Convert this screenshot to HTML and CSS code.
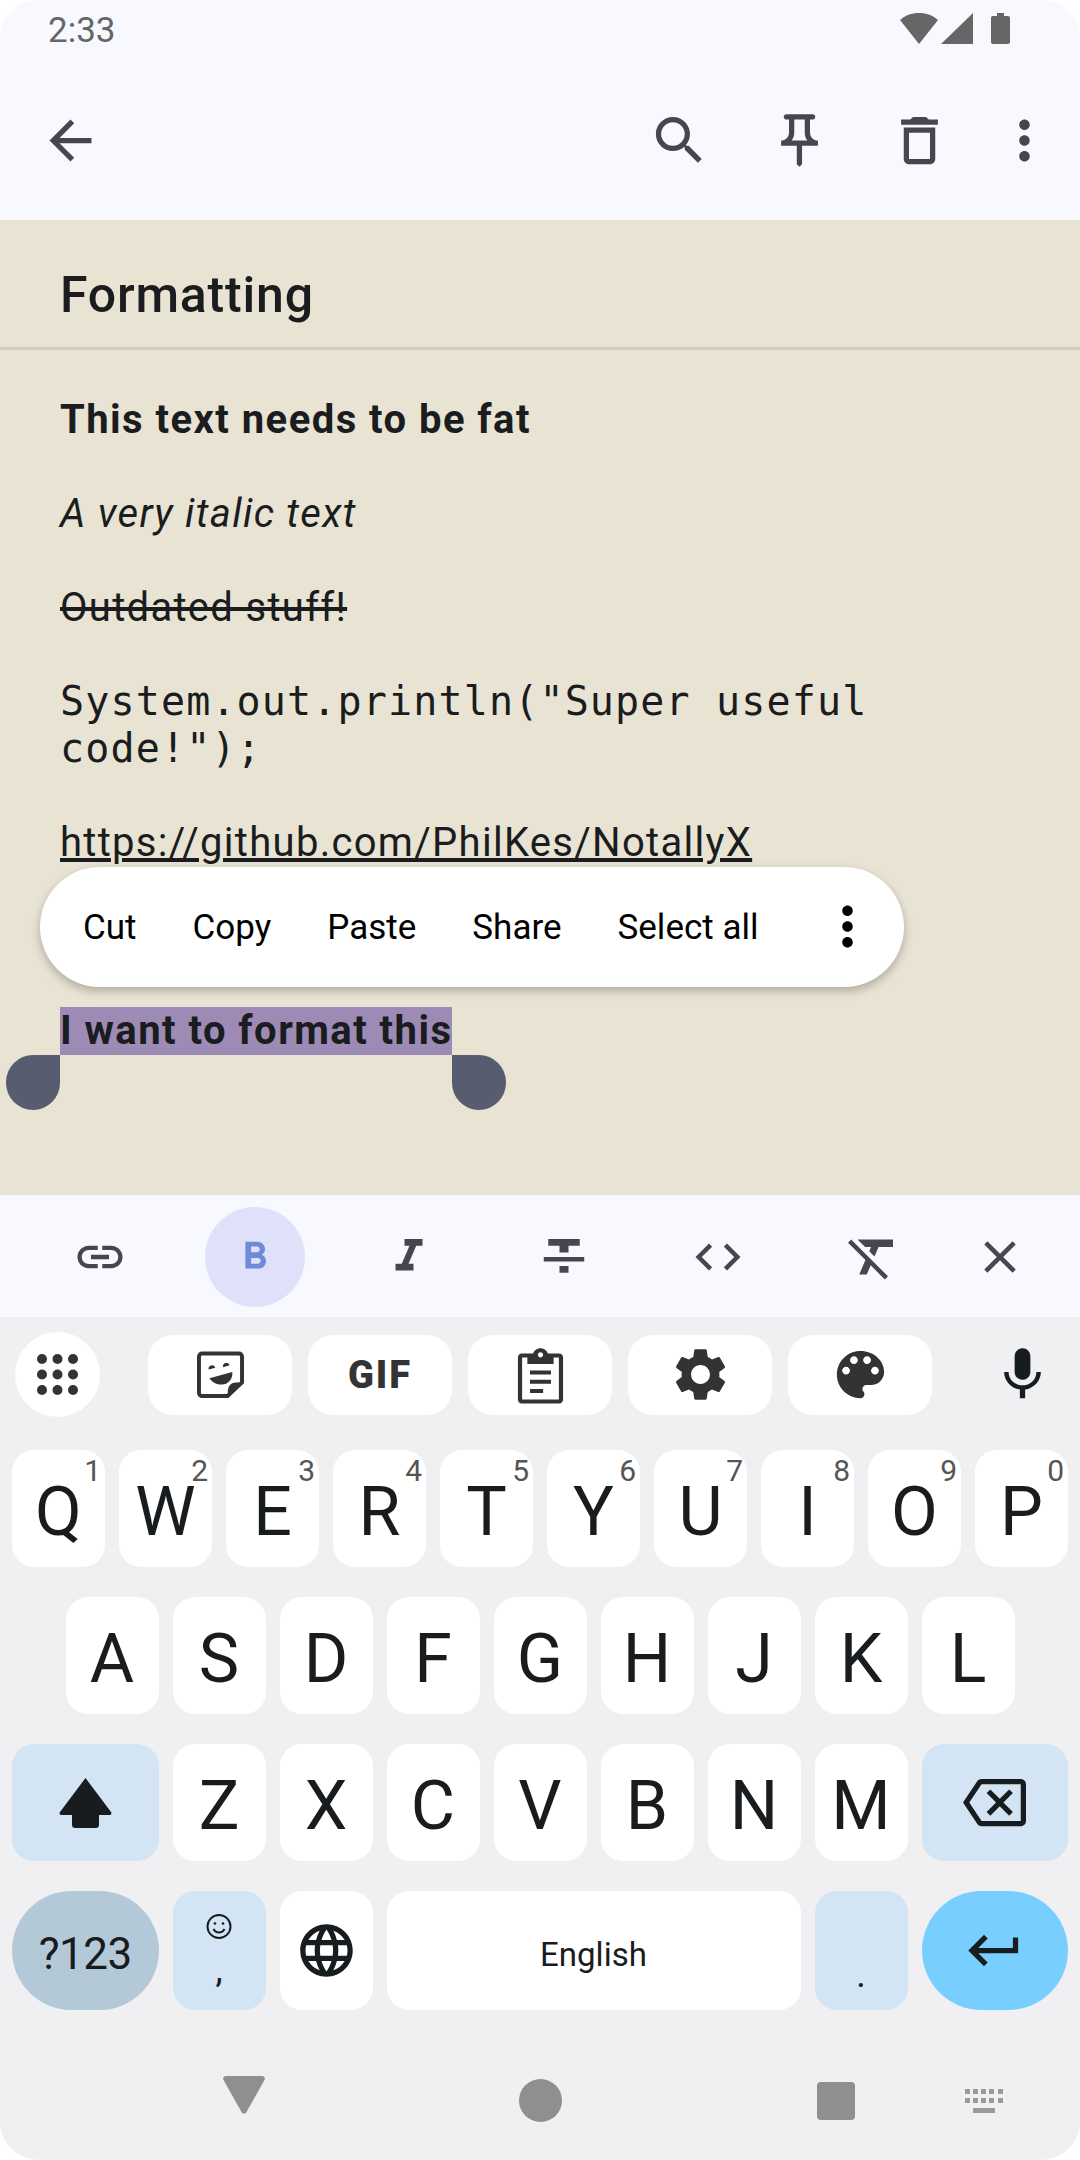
FILE: index.html
```html
<!DOCTYPE html>
<html lang="en">
<head>
<meta charset="UTF-8">
<title>Formatting</title>
<link rel="stylesheet" href="styles.css">
</head>
<body>
<div class="screen">

<!-- STATUS BAR -->
<div class="status">
<span class="time">2:33</span>
<div class="status-icons">
<svg class="wifi" viewBox="0 0 38 31"><path d="M19 31 0 7C5 2.500 11.500 0 19 0s14 2.500 19 7z"/></svg>
<svg class="signal" viewBox="0 0 32 31"><path d="M32 0v31H0z"/></svg>
<svg class="battery" viewBox="0 0 19 31"><path d="M6 0h7v3h4c1.100 0 2 .9 2 2v24c0 1.100-.9 2-2 2H2c-1.100 0-2-.9-2-2V5c0-1.100.9-2 2-2h4z"/></svg>
</div>
</div>

<!-- TOOLBAR -->
<div class="toolbar">
<svg class="icon back" viewBox="0 0 24 24"><path d="M20 11H7.830l5.590-5.590L12 4l-8 8 8 8 1.410-1.410L7.830 13H20v-2z"/></svg>
<svg class="icon" viewBox="0 0 24 24"><path d="M15.500 14h-.79l-.28-.27C15.410 12.590 16 11.110 16 9.500 16 5.910 13.090 3 9.500 3S3 5.910 3 9.500 5.910 16 9.500 16c1.610 0 3.090-.59 4.230-1.570l.27.28v.79l5 4.990L20.490 19l-4.990-5zm-6 0C7.010 14 5 11.990 5 9.500S7.010 5 9.500 5 14 7.010 14 9.500 11.990 14 9.500 14z"/></svg>
<svg class="icon" viewBox="0 0 24 24"><path d="M14 4v5c0 1.120.37 2.160 1 3H9c.65-.86 1-1.900 1-3V4h4m3-2H7c-.55 0-1 .45-1 1s.45 1 1 1h1v5c0 1.660-1.340 3-3 3v2h5.970v7l1 1 1-1v-7H19v-2c-1.660 0-3-1.340-3-3V4h1c.55 0 1-.45 1-1s-.45-1-1-1z"/></svg>
<svg class="icon" viewBox="0 0 24 24"><path d="M16 9v10H8V9h8m-1.500-6h-5l-1 1H5v2h14V4h-3.500l-1-1zM18 7H6v12c0 1.100.9 2 2 2h8c1.100 0 2-.9 2-2V7z"/></svg>
<svg class="icon more" viewBox="0 0 24 24"><path d="M12 8c1.100 0 2-.9 2-2s-.9-2-2-2-2 .9-2 2 .9 2 2 2zm0 2c-1.100 0-2 .9-2 2s.9 2 2 2 2-.9 2-2-.9-2-2-2zm0 6c-1.100 0-2 .9-2 2s.9 2 2 2 2-.9 2-2-.9-2-2-2z"/></svg>
</div>

<!-- NOTE -->
<div class="note">
<div class="title">Formatting</div>
<div class="body">
<p class="line bold">This text needs to be fat</p>
<p class="line italic">A very italic text</p>
<p class="line strike">Outdated stuff!</p>
<p class="line mono">System.out.println("Super useful<br>code!");</p>
<p class="line link">https://github.com/PhilKes/NotallyX</p>
<p class="line bold last"><span class="selected">I want to format this<i class="handle left"></i><i class="handle right"></i></span></p>
</div>

<!-- MENU SOBRE EL TEXTO -->
<div class="popup">
<span>Cut</span><span>Copy</span><span>Paste</span><span>Share</span><span>Select all</span>
<svg class="popup-more" viewBox="0 0 24 24"><path d="M12 8c1.100 0 2-.9 2-2s-.9-2-2-2-2 .9-2 2 .9 2 2 2zm0 2c-1.100 0-2 .9-2 2s.9 2 2 2 2-.9 2-2-.9-2-2-2zm0 6c-1.100 0-2 .9-2 2s.9 2 2 2 2-.9 2-2-.9-2-2-2z"/></svg>
</div>
</div>

<!-- FORMAT BAR -->
<div class="format-bar">
<div class="fmt"><svg class="icon" viewBox="0 0 24 24"><path d="M3.900 12c0-1.710 1.390-3.100 3.100-3.100h4V7H7c-2.760 0-5 2.240-5 5s2.240 5 5 5h4v-1.900H7c-1.710 0-3.100-1.390-3.100-3.100zM8 13h8v-2H8v2zm9-6h-4v1.900h4c1.710 0 3.100 1.390 3.100 3.100s-1.390 3.100-3.100 3.100h-4V17h4c2.760 0 5-2.240 5-5s-2.240-5-5-5z"/></svg></div>
<div class="fmt active"><svg class="icon" viewBox="0 0 24 24"><path d="M15.600 10.790c.97-.67 1.650-1.770 1.650-2.790 0-2.260-1.750-4-4-4H7v14h7.040c2.090 0 3.710-1.700 3.710-3.790 0-1.520-.86-2.820-2.150-3.420zM10 6.500h3c.83 0 1.500.67 1.500 1.500s-.67 1.500-1.500 1.500h-3v-3zm3.500 9H10v-3h3.500c.83 0 1.500.67 1.500 1.500s-.67 1.500-1.500 1.500z"/></svg></div>
<div class="fmt"><svg class="icon" viewBox="0 0 24 24"><path d="M10 4v3h2.210l-3.420 8H6v3h8v-3h-2.210l3.420-8H18V4z"/></svg></div>
<div class="fmt"><svg class="icon" viewBox="0 0 24 24"><path d="M10 19h4v-3h-4v3zM5 4v3h5v3h4V7h5V4H5zM3 14h18v-2H3v2z"/></svg></div>
<div class="fmt"><svg class="icon" viewBox="0 0 24 24"><path d="M9.400 16.600 4.800 12l4.600-4.600L8 6l-6 6 6 6 1.400-1.400zm5.200 0 4.600-4.600-4.600-4.600L16 6l6 6-6 6-1.400-1.400z"/></svg></div>
<div class="fmt clear"><svg class="icon" viewBox="0 0 24 24"><path d="M3.270 5 2 6.270l6.970 6.970L6.500 19h3l1.570-3.660L16.730 21 18 19.730 3.550 5.270 3.270 5zM6 5v.18L8.820 8h2.400l-.72 1.680 2.100 2.100L14.210 8H20V5H6z"/></svg></div>
<div class="fmt close"><svg class="icon" viewBox="0 0 24 24"><path d="M19 6.410 17.590 5 12 10.590 6.410 5 5 6.410 10.590 12 5 17.590 6.410 19 12 13.410 17.590 19 19 17.590 13.410 12z"/></svg></div>
</div>

<!-- TECLADO -->
<div class="keyboard">
<div class="suggest">
<div class="grid-btn">
<svg viewBox="0 0 42 42"><g><circle cx="5" cy="5" r="5"/><circle cx="20.500" cy="5" r="5"/><circle cx="36" cy="5" r="5"/><circle cx="5" cy="20.500" r="5"/><circle cx="20.500" cy="20.500" r="5"/><circle cx="36" cy="20.500" r="5"/><circle cx="5" cy="36" r="5"/><circle cx="20.500" cy="36" r="5"/><circle cx="36" cy="36" r="5"/></g></svg>
</div>
<div class="chip"><svg class="icon" viewBox="0 0 24 24"><path class="sticker-line" d="M5 4h14a1.200 1.200 0 0 1 1.200 1.200v9.800l-5.500 5.200H5a1.200 1.200 0 0 1-1.200-1.200V5.200A1.200 1.200 0 0 1 5 4z"/><path d="M14.800 20.500V18a3 3 0 0 1 3-3h3zM7.800 13.400 16.500 11c.3 2.800-1.700 4.800-4 4.800-2 0-3.700-.8-4.700-2.400zM7.500 10.100a1.300 1.300 0 0 1 2.500-.7zM13 9.200a1.300 1.300 0 0 1 2.500-.7z"/></svg></div>
<div class="chip gif">GIF</div>
<div class="chip"><svg class="icon" viewBox="0 0 24 24"><path d="M19 4h-4.200C14.400 2.800 13.300 2 12 2s-2.400.8-2.800 2H5c-1.100 0-1.600.7-1.600 1.600v15.800c0 .9.500 1.600 1.600 1.600h14c1.100 0 1.600-.7 1.600-1.600V5.600C20.600 4.700 20.100 4 19 4zm-7-.5c.55 0 1 .45 1 1s-.45 1-1 1-1-.45-1-1 .45-1 1-1zM19 21.500H5V5.500h2V8h10V5.500h2zM8 10.500h8v1.500H8zm0 3.500h8v1.500H8zm0 3.500h5V19H8z"/></svg></div>
<div class="chip"><svg class="icon" viewBox="0 0 24 24"><path d="M19.140 12.940c.04-.3.06-.61.06-.94 0-.32-.02-.64-.07-.94l2.030-1.580c.18-.14.23-.41.12-.61l-1.920-3.320c-.12-.22-.37-.29-.59-.22l-2.390.96c-.5-.38-1.030-.7-1.620-.94l-.36-2.540c-.04-.24-.24-.41-.48-.41h-3.840c-.24 0-.43.17-.47.41l-.36 2.540c-.59.24-1.130.57-1.620.94l-2.390-.96c-.22-.08-.47 0-.59.22L2.740 8.870c-.12.21-.08.47.12.61l2.030 1.580c-.05.3-.09.63-.09.94s.02.64.07.94l-2.030 1.580c-.18.14-.23.41-.12.61l1.920 3.320c.12.22.37.29.59.22l2.390-.96c.5.38 1.030.7 1.620.94l.36 2.540c.05.24.24.41.48.41h3.840c.24 0 .44-.17.47-.41l.36-2.540c.59-.24 1.130-.56 1.620-.94l2.390.96c.22.08.47 0 .59-.22l1.920-3.320c.12-.22.07-.47-.12-.61l-2.010-1.580zM12 15.600c-1.980 0-3.600-1.620-3.600-3.600s1.620-3.600 3.600-3.600 3.600 1.620 3.600 3.600-1.620 3.600-3.600 3.600z"/></svg></div>
<div class="chip"><svg class="icon" viewBox="0 0 24 24"><path d="M12 3c-4.970 0-9 4.030-9 9s4.030 9 9 9c.83 0 1.500-.67 1.500-1.500 0-.39-.15-.74-.39-1.010-.23-.26-.38-.61-.38-.99 0-.83.67-1.500 1.500-1.500H16c2.760 0 5-2.240 5-5 0-4.420-4.030-8-9-8zm-5.500 9c-.83 0-1.500-.67-1.500-1.500S5.670 9 6.500 9 8 9.670 8 10.500 7.330 12 6.500 12zm3-4C8.670 8 8 7.330 8 6.500S8.670 5 9.500 5s1.500.67 1.500 1.500S10.330 8 9.500 8zm5 0c-.83 0-1.500-.67-1.500-1.500S13.670 5 14.500 5s1.500.67 1.500 1.500S15.330 8 14.500 8zm3 4c-.83 0-1.500-.67-1.500-1.500S16.670 9 17.500 9s1.500.67 1.500 1.500-.67 1.500-1.500 1.500z"/></svg></div>
<svg class="icon mic" viewBox="0 0 24 24"><path d="M12 14c1.660 0 3-1.340 3-3V5c0-1.660-1.340-3-3-3S9 3.340 9 5v6c0 1.660 1.340 3 3 3zm5.300-3c0 3-2.540 5.100-5.300 5.100S6.700 14 6.700 11H5c0 3.410 2.720 6.230 6 6.720V21h2v-3.280c3.280-.48 6-3.300 6-6.720h-1.700z"/></svg>
</div>

<div class="row">
<div class="key">Q<sup>1</sup></div>
<div class="key">W<sup>2</sup></div>
<div class="key">E<sup>3</sup></div>
<div class="key">R<sup>4</sup></div>
<div class="key">T<sup>5</sup></div>
<div class="key">Y<sup>6</sup></div>
<div class="key">U<sup>7</sup></div>
<div class="key">I<sup>8</sup></div>
<div class="key">O<sup>9</sup></div>
<div class="key">P<sup>0</sup></div>
</div>

<div class="row">
<div class="key">A</div>
<div class="key">S</div>
<div class="key">D</div>
<div class="key">F</div>
<div class="key">G</div>
<div class="key">H</div>
<div class="key">J</div>
<div class="key">K</div>
<div class="key">L</div>
</div>

<div class="row">
<div class="key wide mod"><svg class="shift" viewBox="0 0 53 50"><path d="M26.500 0 52 34c1 1.500.2 3-1.500 3H40v10c0 1.700-1.300 3-3 3H16c-1.700 0-3-1.300-3-3V37H2.500C.8 37 0 35.500 1 34z"/></svg></div>
<div class="key">Z</div>
<div class="key">X</div>
<div class="key">C</div>
<div class="key">V</div>
<div class="key">B</div>
<div class="key">N</div>
<div class="key">M</div>
<div class="key wide mod"><svg class="icon" viewBox="0 0 24 24"><path d="M22 3H7c-.69 0-1.230.35-1.590.88L0 12l5.410 8.110c.36.53.9.89 1.590.89h15c1.100 0 2-.9 2-2V5c0-1.100-.9-2-2-2zm0 16H7.070L2.400 12l4.660-7H22v14zm-11.590-2L14 13.410 17.590 17 19 15.590 15.410 12 19 8.410 17.590 7 14 10.590 10.410 7 9 8.410 12.590 12 9 15.590z"/></svg></div>
</div>

<div class="row last-row">
<div class="key wide sym">?123</div>
<div class="key mod emoji">
<svg viewBox="0 0 26 27"><circle cx="13" cy="13.500" r="11.500"/><circle cx="9" cy="10.500" r="1.300" class="dot"/><circle cx="17" cy="10.500" r="1.300" class="dot"/><path d="M7.500 16c1.200 2.400 3 3.500 5.500 3.500s4.300-1.100 5.500-3.500"/></svg>
<span>,</span>
</div>
<div class="key"><svg class="icon" viewBox="0 0 24 24"><path d="M11.990 2C6.470 2 2 6.480 2 12s4.470 10 9.990 10C17.520 22 22 17.520 22 12S17.520 2 11.990 2zm6.930 6h-2.950c-.32-1.250-.78-2.450-1.380-3.560 1.840.63 3.370 1.910 4.330 3.560zM12 4.040c.83 1.200 1.480 2.530 1.910 3.960h-3.820c.43-1.430 1.080-2.760 1.910-3.960zM4.260 14C4.100 13.360 4 12.690 4 12s.1-1.360.26-2h3.380c-.08.66-.14 1.320-.14 2 0 .68.06 1.340.14 2H4.260zm.82 2h2.950c.32 1.250.78 2.450 1.380 3.560-1.840-.63-3.370-1.900-4.330-3.560zm2.950-8H5.080c.96-1.660 2.490-2.930 4.330-3.560C8.810 5.550 8.350 6.750 8.030 8zM12 19.960c-.83-1.200-1.480-2.530-1.910-3.960h3.820c-.43 1.430-1.080 2.760-1.910 3.960zM14.340 14H9.660c-.09-.66-.16-1.320-.16-2 0-.68.07-1.350.16-2h4.680c.09.65.16 1.320.16 2 0 .68-.07 1.340-.16 2zm.25 5.560c.6-1.110 1.060-2.310 1.380-3.560h2.950c-.96 1.650-2.490 2.930-4.330 3.560zM16.360 14c.08-.66.14-1.320.14-2 0-.68-.06-1.340-.14-2h3.380c.16.64.26 1.310.26 2s-.1 1.360-.26 2h-3.380z"/></svg></div>
<div class="key space">English</div>
<div class="key mod period">.</div>
<div class="key wide enter"><svg class="icon" viewBox="0 0 24 24"><path d="M19 7v4H5.830l3.580-3.590L8 6l-6 6 6 6 1.410-1.410L5.830 13H21V7z"/></svg></div>
</div>

<!-- NAV -->
<div class="nav">
<svg class="nav-back" viewBox="0 0 42 38"><path d="M3 0h36c2.300 0 3.500 2 2.500 4L23.500 36c-1.200 2.300-3.800 2.300-5 0L.5 4C-.5 2 .7 0 3 0z"/></svg>
<div class="nav-home"></div>
<div class="nav-recent"></div>
<svg class="nav-kb" viewBox="0 0 38 24"><path d="M0 0h5v5H0zM8 0h5v5H8zM16 0h5v5h-5zM24 0h5v5h-5zM33 0h5v5h-5zM0 9h5v5H0zM8 9h5v5H8zM16 9h5v5h-5zM24 9h5v5h-5zM33 9h5v5h-5zM8 19h22v5H8z"/></svg>
</div>
</div>

</div>
</body>
</html>
```

FILE: styles.css
```css
body{
margin:0;
background:#fff;
font-family:Roboto,sans-serif;
color:#1a1c20;
}

.screen{
width:1080px;
height:2160px;
display:flex;
flex-direction:column;
overflow:hidden;
border-radius:38px;
}

/* STATUS */
.status{
height:60px;
flex:none;
background:#f8f8ff;
display:flex;
justify-content:space-between;
align-items:flex-start;
padding:0 70px 0 48px;
}
.time{
font-size:35px;
line-height:62px;
color:#666;
}
.status-icons{
display:flex;
align-items:flex-start;
padding-top:13px;
fill:#666;
}
.wifi{width:38px;height:31px;}
.signal{width:32px;height:31px;margin-left:3px;}
.battery{width:19px;height:31px;margin-left:18px;}

/* ICONS */
.icon{
width:63px;
height:63px;
flex:none;
fill:#49454f;
}

/* TOOLBAR */
.toolbar{
height:160px;
flex:none;
background:#f8f8ff;
display:flex;
align-items:center;
gap:57px;
padding:0 24px 0 39px;
}
.back{margin-right:auto;}
.more{margin-left:-15px;}

/* NOTE */
.note{
position:relative;
flex:1;
background:#e8e3d2;
}
.title{
height:130px;
box-sizing:border-box;
border-bottom:3px solid #d2cdbf;
padding:0 60px;
font-size:50px;
line-height:150px;
font-weight:500;
letter-spacing:.8px;
}
.body{
padding:46px 60px 0;
font-size:40px;
line-height:47px;
letter-spacing:1.300px;
}
.line{
margin:0 0 47px;
}
.bold{font-weight:700;letter-spacing:1.450px;}
.italic{font-style:italic;}
.strike{text-decoration:line-through;}
.mono{font-family:"DejaVu Sans Mono",monospace;letter-spacing:1.150px;}
.link{text-decoration:underline;margin-bottom:141px;}
.last{margin:0;}

.selected{
position:relative;
display:inline-block;
height:48px;
background:#9d8bb6;
}
.handle{
position:absolute;
top:100%;
width:54px;
height:55px;
background:#585c70;
}
.handle.left{left:-54px;border-radius:27px 0 27px 27px;}
.handle.right{left:100%;border-radius:0 27px 27px 27px;}

/* POPUP */
.popup{
position:absolute;
left:40px;
top:647px;
width:864px;
height:120px;
box-sizing:border-box;
padding-left:43px;
display:flex;
align-items:center;
gap:56px;
background:#fff;
border-radius:60px;
box-shadow:0 4px 10px rgba(0,0,0,0.25);
font-size:35px;
color:#000;
}
.popup-more{
width:63px;
height:63px;
fill:#000;
position:absolute;
left:776px;
top:28px;
}

/* FORMAT BAR */
.format-bar{
height:122px;
flex:none;
box-sizing:border-box;
padding:2px 0 0 50px;
background:#f8f8ff;
display:flex;
align-items:center;
gap:54.600px;
}
.fmt{
width:100px;
height:100px;
flex:none;
border-radius:50%;
display:flex;
align-items:center;
justify-content:center;
}
.fmt .icon{width:54px;height:54px;}
.active{background:#dfe1fa;}
.active .icon{fill:#6f8ad8;}
.fmt.active .icon{width:46px;height:46px;}
.fmt.clear .icon{width:60px;height:60px;}
.close{margin-left:-27.600px;}

/* KEYBOARD */
.keyboard{
flex:none;
height:843px;
background:#f0f0f2;
}
.suggest{
display:flex;
align-items:center;
padding:15px 0 0 15px;
}
.grid-btn{
width:85px;
height:85px;
flex:none;
border-radius:50%;
background:#fff;
display:flex;
align-items:center;
justify-content:center;
}
.grid-btn svg{width:42px;height:42px;fill:#333;}
.chip{
width:144px;
height:80px;
flex:none;
margin-right:16px;
border-radius:25px;
background:#fff;
display:flex;
align-items:center;
justify-content:center;
}
.chip .icon{fill:#333;}
.sticker-line{fill:none;stroke:#333;stroke-width:1.500;}
.grid-btn + .chip{margin-left:48px;}
.gif{
font-size:38px;
font-weight:900;
letter-spacing:2px;
color:#333;
}
.mic{fill:#171c1f;margin-left:43px;}

.row{
display:flex;
justify-content:center;
gap:14px;
margin-top:30px;
}
.suggest + .row{margin-top:33px;}
.key{
position:relative;
width:93px;
height:117px;
box-sizing:border-box;
padding-top:7px;
flex:none;
border-radius:22px;
background:#fff;
display:flex;
align-items:center;
justify-content:center;
font-size:68px;
color:#191c1e;
}
.key .icon{fill:#171c1f;margin-top:-7px;}
.key sup{
position:absolute;
top:3px;
right:4px;
font-size:30px;
line-height:36px;
color:#555;
}
.wide{width:146.500px;}
.mod{background:#d3e4f4;}
.shift{width:53px;height:50px;fill:#171c1f;margin-top:-7px;}
.last-row .key{height:119px;}
.sym{
background:#b3c9d7;
border-radius:60px;
font-size:44px;
letter-spacing:-.5px;
}
.space{
width:414px;
font-size:33px;
}
.period{
font-size:36px;
align-items:flex-end;
padding-bottom:14px;
}
.enter{
background:#78cfff;
border-radius:60px;
}
.emoji{
flex-direction:column;
justify-content:flex-start;
padding-top:0;
}
.emoji svg{
width:26px;
height:27px;
margin-top:22px;
fill:none;
stroke:#191c1e;
stroke-width:2;
}
.emoji .dot{fill:#191c1e;stroke:none;}
.emoji span{
font-size:36px;
line-height:40px;
margin-top:10px;
}

/* NAV */
.nav{
display:grid;
grid-template-columns:296px 296px 296px 38px;
justify-items:center;
align-items:center;
padding:66px 0 0 96px;
}
.nav-back{width:42px;height:38px;fill:#8f8f8f;margin-bottom:11px;}
.nav-home{width:43px;height:43px;border-radius:50%;background:#8f8f8f;}
.nav-recent{width:38px;height:38px;border-radius:4px;background:#8f8f8f;}
.nav-kb{width:38px;height:24px;fill:#9a9a9a;margin-left:-38px;}
```
